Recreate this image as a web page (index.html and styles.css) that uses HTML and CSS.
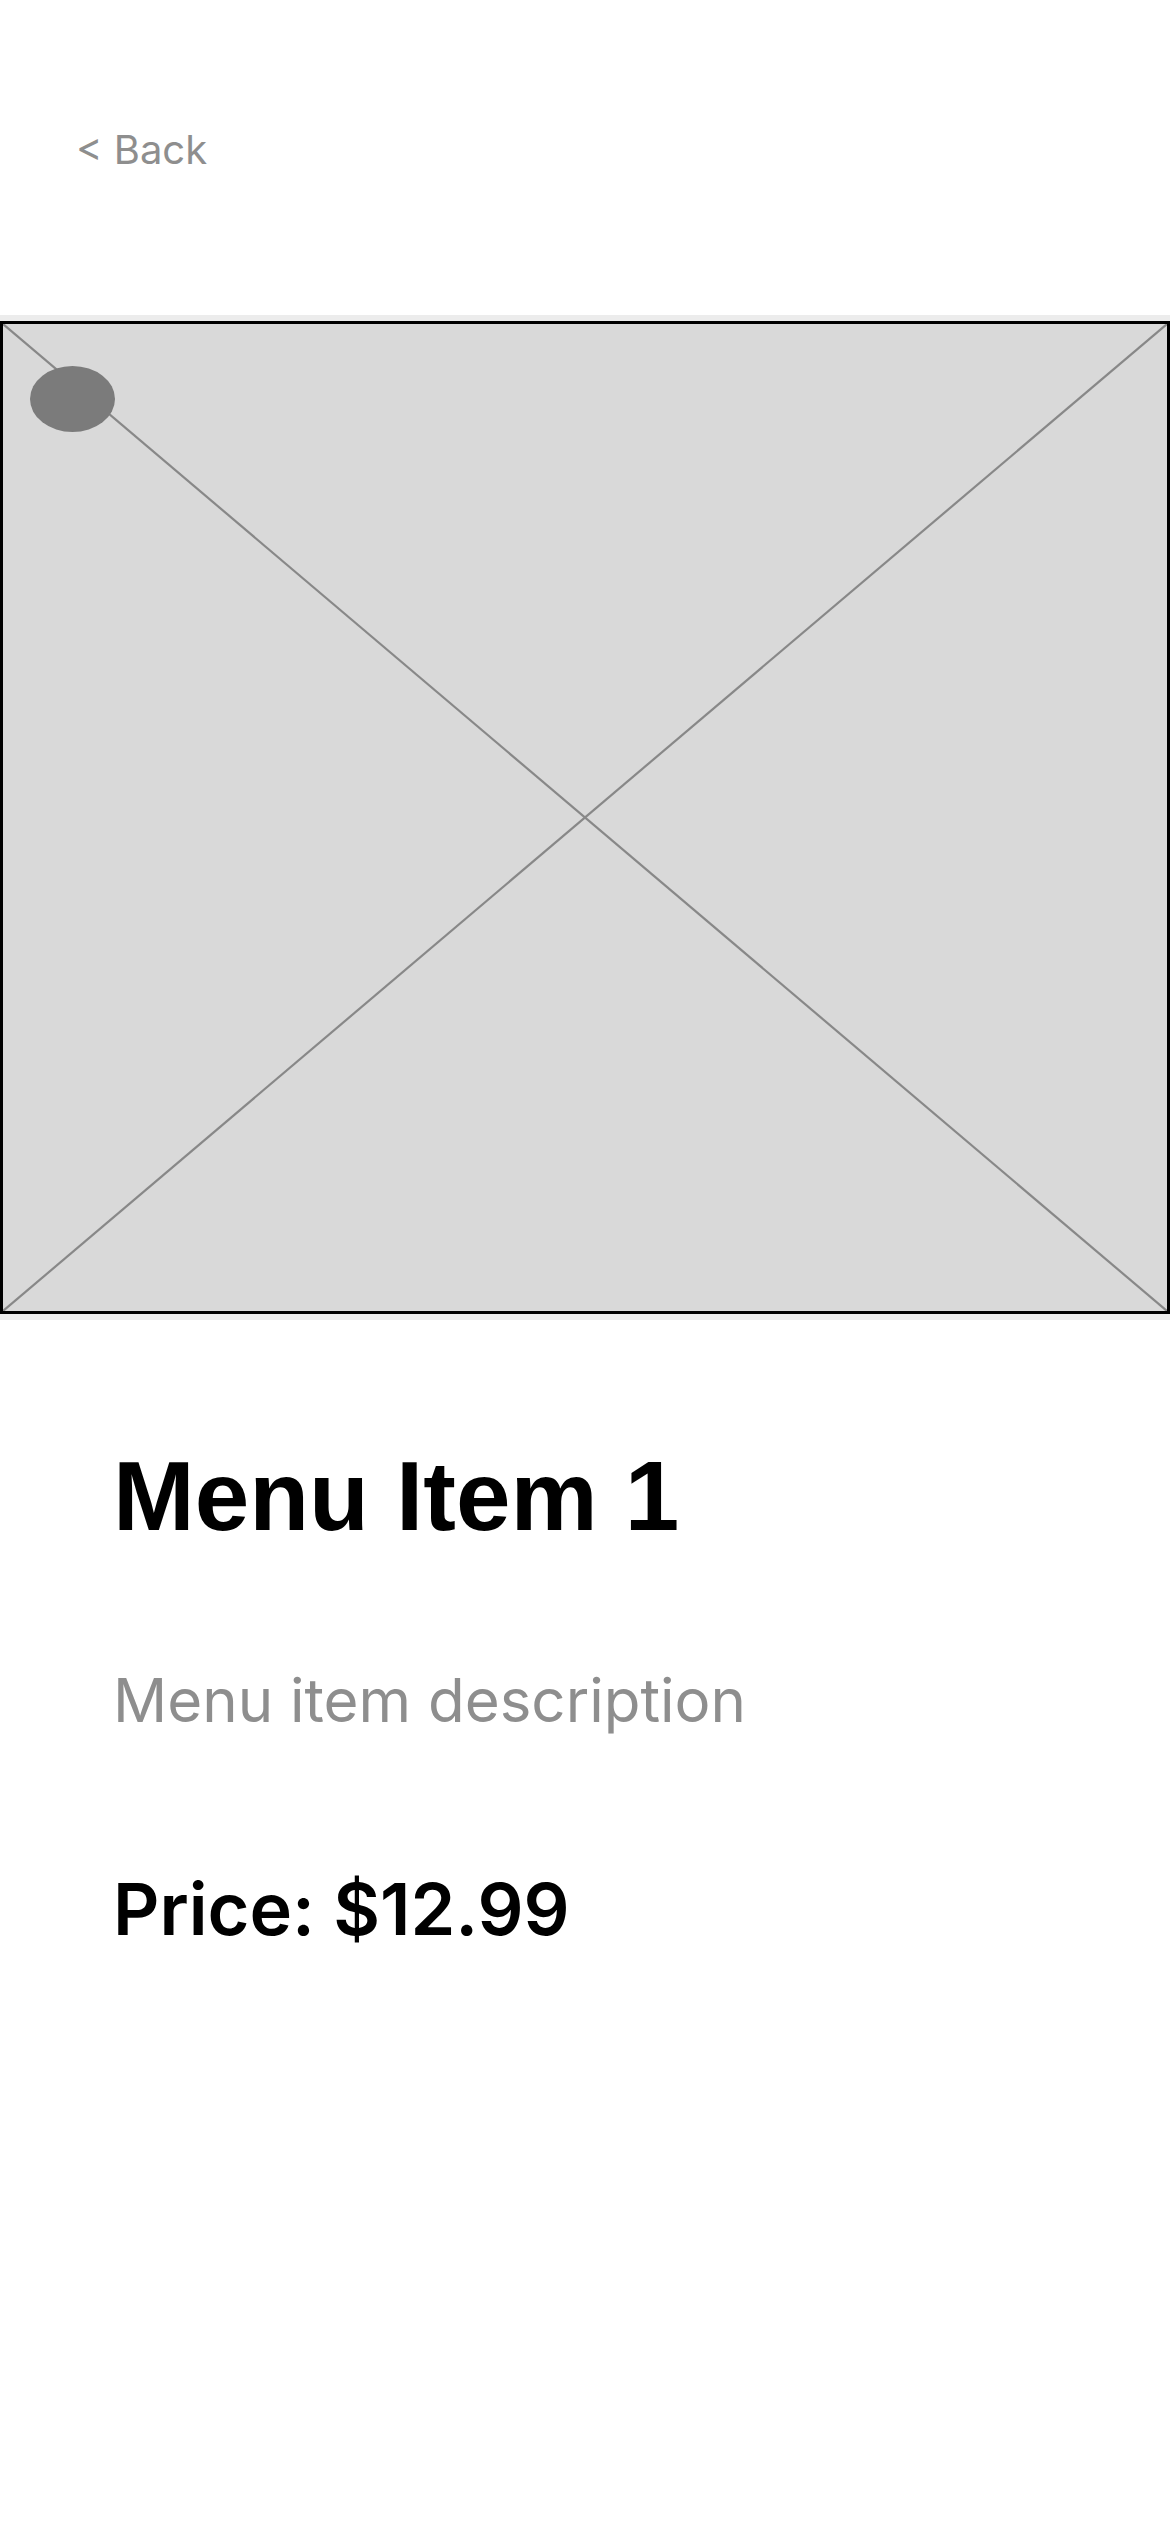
FILE: index.html
```html
<!DOCTYPE html>
<html>
<head>
<meta charset="utf-8">
<link rel="stylesheet" href="styles.css">
</head>
<body>
<div class="page">
  <header class="topbar">
    <span class="back">&lt; Back</span>
  </header>
  <div class="hero">
    <div class="placeholder">
      <svg class="cross" xmlns="http://www.w3.org/2000/svg">
        <line x1="0" y1="0" x2="100%" y2="100%" stroke="#888888" stroke-width="2.2"/>
        <line x1="0" y1="100%" x2="100%" y2="0" stroke="#888888" stroke-width="2.2"/>
        <ellipse cx="69.5" cy="75" rx="42.5" ry="33" fill="#7b7b7b"/>
      </svg>
    </div>
  </div>
  <main class="details">
    <h1 class="title">Menu Item 1</h1>
    <p class="desc">Menu item description</p>
    <p class="price">Price: $12.99</p>
  </main>
</div>
</body>
</html>
```

FILE: styles.css
```css
html, body {
  margin: 0;
  padding: 0;
  background: #ffffff;
}
.page {
  width: 1170px;
  min-height: 2532px;
  background: #ffffff;
  font-family: Inter, "Noto Sans", sans-serif;
}
.topbar {
  padding: 126px 0 0 76px;
  height: 48px;
}
.back {
  font-size: 40px;
  line-height: 48px;
  color: #8e8e8e;
}
.hero {
  margin-top: 141px;
  background: #ececec;
  padding: 6px 0;
}
.placeholder {
  height: 987px;
  border: 3px solid #000000;
  background: #d9d9d9;
}
.cross {
  display: block;
  width: 100%;
  height: 100%;
}
.details {
  padding-left: 113px;
}
.title {
  margin: 117px 0 0 0;
  font-family: "Liberation Sans", Arial, sans-serif;
  font-weight: 700;
  font-size: 98px;
  line-height: 118px;
  color: #000000;
}
.desc {
  margin: 109px 0 0 0;
  font-size: 60px;
  line-height: 72px;
  color: #8e8e8e;
}
.price {
  margin: 129px 0 0 0;
  font-size: 72px;
  line-height: 88px;
  font-weight: 600;
  color: #000000;
}
```
